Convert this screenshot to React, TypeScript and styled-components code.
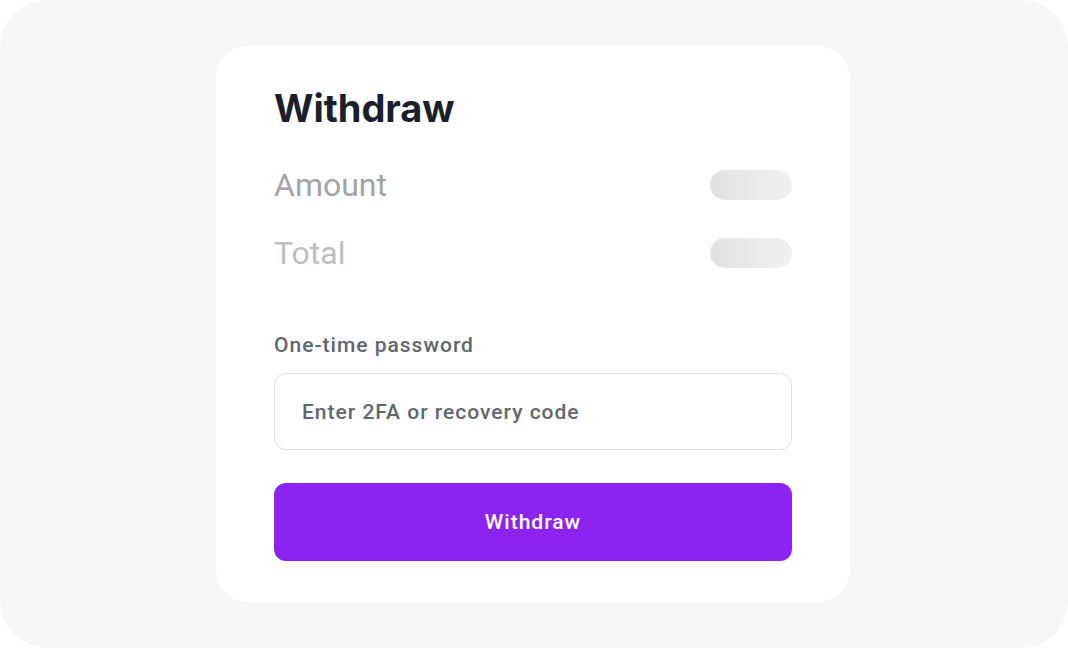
import React from "react";
import styled, { createGlobalStyle } from "styled-components";

const Global = createGlobalStyle`
  html, body { margin: 0; padding: 0; background: #ffffff; }
  * { box-sizing: border-box; }
`;

const Page = styled.div`
  width: 1068px;
  height: 648px;
  background: #f5f6f8;
  border-radius: 48px;
  display: flex;
  justify-content: flex-start;
  align-items: flex-start;
  padding: 46px 0 0 216px;
`;

const Card = styled.div`
  width: 634px;
  height: 556px;
  background: #ffffff;
  border-radius: 32px;
  padding: 40px 58px 0 58px;
  display: flex;
  flex-direction: column;
`;

const Title = styled.h1`
  margin: 0;
  font-family: Inter, "Liberation Sans", sans-serif;
  font-weight: 700;
  font-size: 38px;
  line-height: 44px;
  letter-spacing: 0;
  color: #191f2b;
`;

const Rows = styled.div`
  margin-top: 40px;
  display: flex;
  flex-direction: column;
  gap: 38px;
`;

const Row = styled.div`
  display: flex;
  align-items: center;
  justify-content: space-between;
  height: 30px;
`;

const RowLabel = styled.span<{ $tone: string }>`
  font-family: Roboto, "Liberation Sans", sans-serif;
  font-weight: 400;
  font-size: 32px;
  color: ${(p) => p.$tone};
`;

const Skeleton = styled.div`
  width: 82px;
  height: 30px;
  border-radius: 15px;
  background: linear-gradient(90deg, #e1e1e1 0%, #f1f1f1 100%);
`;

const Field = styled.label`
  margin-top: 65px;
  display: flex;
  flex-direction: column;
  gap: 16px;
`;

const FieldLabel = styled.span`
  font-family: Roboto, "Liberation Sans", sans-serif;
  font-weight: 500;
  font-size: 21px;
  line-height: 24px;
  letter-spacing: 1px;
  color: #5d6770;
`;

const Input = styled.input`
  width: 100%;
  height: 77px;
  border: 1.5px solid #dde0e4;
  border-radius: 12px;
  padding: 0 27px;
  font-family: Roboto, "Liberation Sans", sans-serif;
  font-weight: 500;
  font-size: 21px;
  letter-spacing: 1px;
  outline: none;
  color: #2a3038;
  &::placeholder {
    color: #5f6870;
  }
`;

const Button = styled.button`
  margin-top: 33px;
  height: 78px;
  width: 100%;
  border: none;
  border-radius: 12px;
  background: #8c23f0;
  color: #ffffff;
  font-family: Roboto, "Liberation Sans", sans-serif;
  font-weight: 500;
  font-size: 21px;
  letter-spacing: 1px;
  cursor: pointer;
`;

export default function App() {
  return (
    <>
      <Global />
      <Page>
        <Card>
          <Title>Withdraw</Title>
          <Rows>
            <Row>
              <RowLabel $tone="#a1a4a9">Amount</RowLabel>
              <Skeleton />
            </Row>
            <Row>
              <RowLabel $tone="#bdbebf">Total</RowLabel>
              <Skeleton />
            </Row>
          </Rows>
          <Field>
            <FieldLabel>One-time password</FieldLabel>
            <Input placeholder="Enter 2FA or recovery code" />
          </Field>
          <Button>Withdraw</Button>
        </Card>
      </Page>
    </>
  );
}
